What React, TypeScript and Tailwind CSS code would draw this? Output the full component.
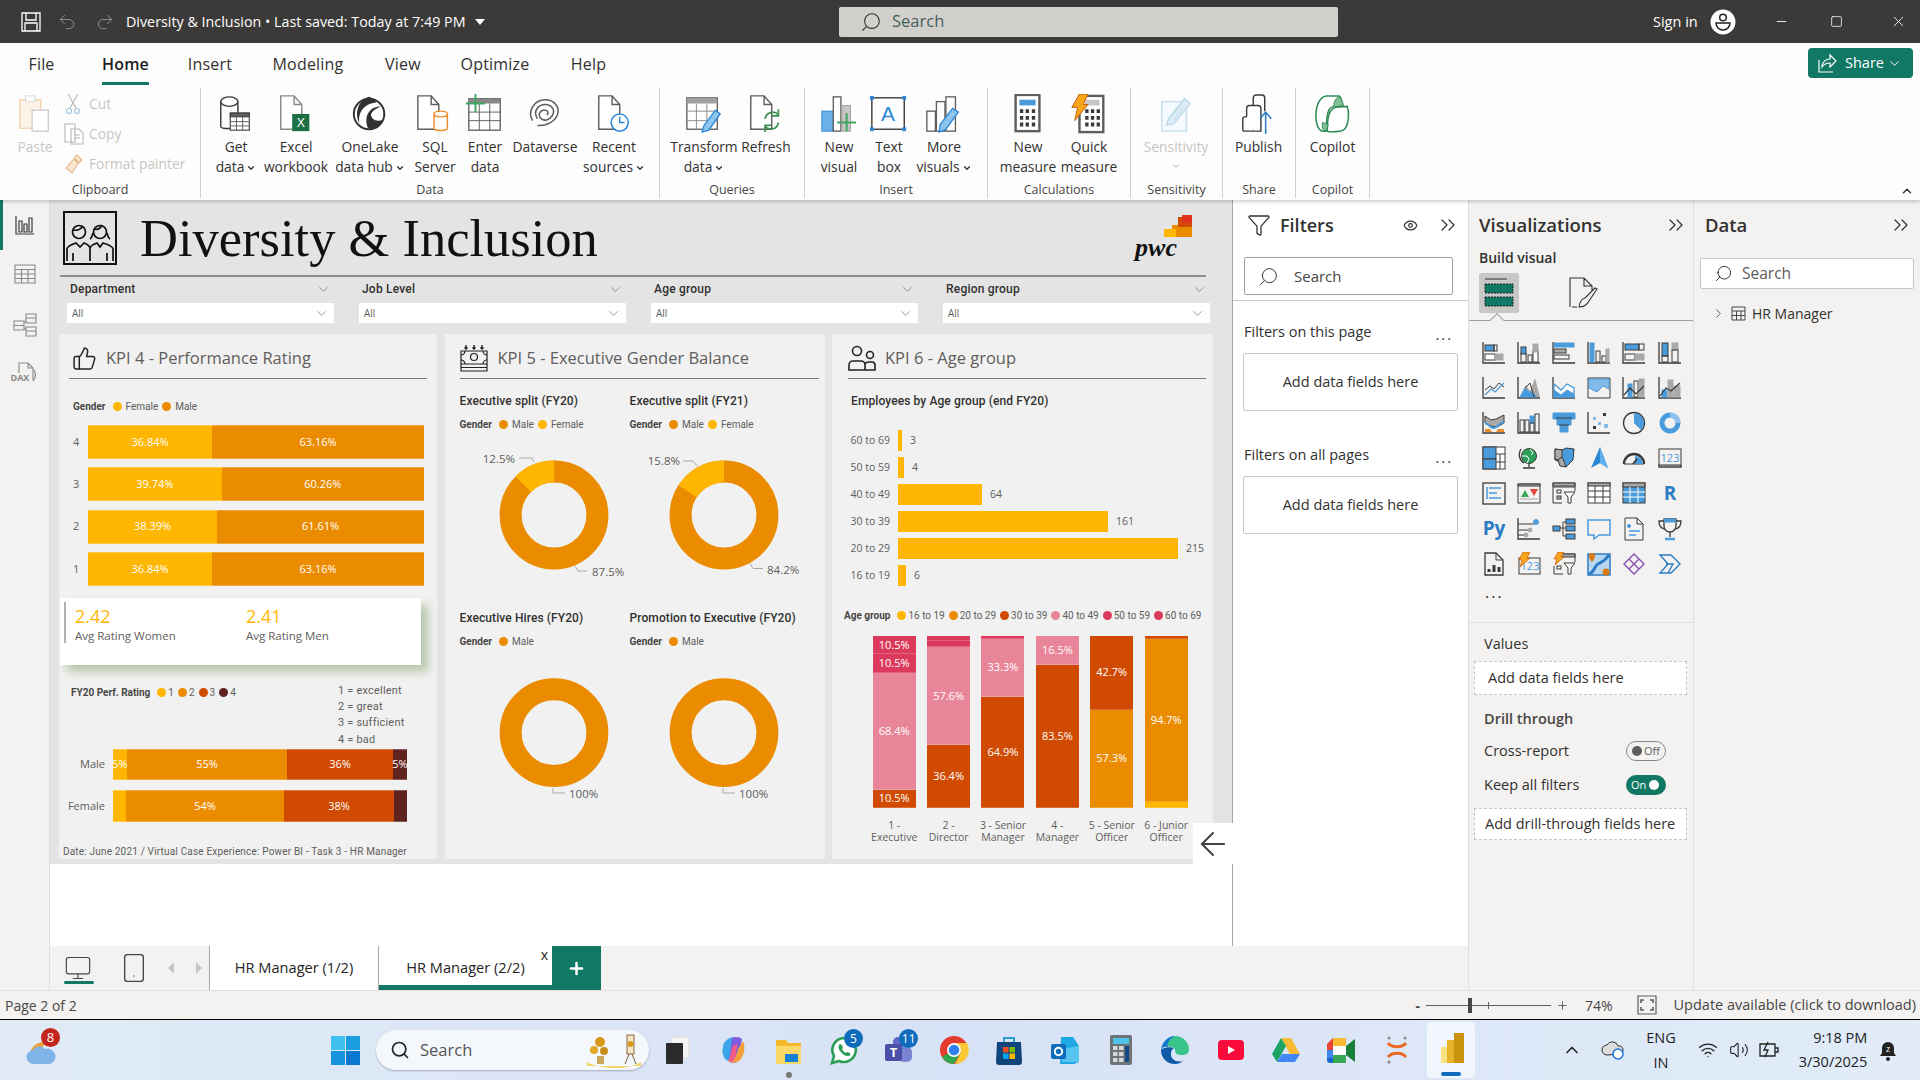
import { ReactNode } from 'react';
import {
  ArrowLeft, ChevronDown, ChevronRight, ChevronsRight, ChevronUp, Eye, Funnel, Minus, Monitor, Plus,
  Redo2, Search, Smartphone, Square, ThumbsUp, Undo2, Volume2, Wifi, X,
} from 'lucide-react';

const K = '#3b3a39';
const B = '#4a9bdc';
const G = '#a9a9a9';

const Svg = ({ children, s = 24, box = 24, cls = '' }: { children: ReactNode; s?: number; box?: number; cls?: string }) => (
  <svg width={s} height={s} viewBox={`0 0 ${box} ${box}`} fill="none" stroke={K} strokeWidth="1" className={cls}>
    {children}
  </svg>
);

const Axis = () => <path d="M1 1v21h22" stroke={K} strokeWidth="1.3" />;

// ---------- ribbon icons ----------
const doc = 'M5 2h14l8 9v26H5z M19 2v9h8';
const ribbonIcons: Record<string, ReactNode> = {
  paste: (
    <>
      <rect x="5" y="6" width="22" height="30" fill="#fdf3e6" stroke="#f0d5b0" strokeWidth="1.5" />
      <rect x="11" y="2" width="10" height="6" fill="#fff" stroke="#d8d8d8" />
      <rect x="18" y="17" width="17" height="22" fill="#fff" stroke="#cfcfcf" strokeWidth="1.5" />
    </>
  ),
  get: (
    <>
      <path d="M5 8v26c0 3 18 3 18 0V8" strokeWidth="1.5" />
      <ellipse cx="14" cy="8" rx="9" ry="5" fill="#fff" strokeWidth="1.5" />
      <rect x="15" y="20" width="20" height="18" fill="#fff" stroke="#605e5c" strokeWidth="1.4" />
      <rect x="15" y="20" width="20" height="4" fill="#605e5c" />
      <path d="M15 29h20M15 33.5h20M21.5 24v14M28 24v14" stroke="#605e5c" />
    </>
  ),
  excel: (
    <>
      <path d={doc} fill="#fff" stroke="#8a8886" strokeWidth="1.5" />
      <rect x="17" y="21" width="18" height="18" fill="#1d7044" stroke="none" />
      <text x="26" y="35" fontSize="13" textAnchor="middle" fill="#fff" stroke="none" fontFamily="Liberation Sans">X</text>
    </>
  ),
  lake: (
    <>
      <circle cx="20" cy="21" r="16" fill="#fff" stroke="#323130" strokeWidth="2" />
      <path d="M20 3C9 6 4 20 10 31c-2-12 5-21 18-22-2-3-5-5-8-6zM32 13C20 13 14 24 19 36c6 1 14-2 16-9-8 3-13-1-13-6 2-4 6-6 10-8z" fill="#323130" stroke="none" />
    </>
  ),
  sql: (
    <>
      <path d={doc} fill="#fff" stroke="#605e5c" strokeWidth="1.5" transform="translate(-2 0)" />
      <path d="M20 21v15c0 3 14 3 14 0V21" fill="#fff" stroke="#ea8c2b" strokeWidth="1.5" />
      <ellipse cx="27" cy="21" rx="7" ry="3" fill="#fff" stroke="#ea8c2b" strokeWidth="1.5" />
    </>
  ),
  enter: (
    <>
      <rect x="4" y="5" width="33" height="33" fill="#fff" stroke="#605e5c" strokeWidth="1.4" />
      <rect x="4" y="5" width="33" height="5" fill="#8a8886" stroke="none" />
      <path d="M4 19h33M4 28h33M15 10v28M26 10v28" stroke="#605e5c" />
      <path d="M11 0v19M1 10h20" stroke="#3ba55d" strokeWidth="2" />
    </>
  ),
  verse: (
    <>
      <path d="M8 28C2 18 10 6 21 6c10 0 16 8 13 16-3 7-12 12-21 11" stroke="#605e5c" strokeWidth="1.6" />
      <path d="M13 26C8 18 14 11 21 11c7 0 11 6 8 11-3 6-10 7-13 3-3-5 2-9 5-8 3 0 4 3 2 5" stroke="#605e5c" strokeWidth="1.6" />
    </>
  ),
  recent: (
    <>
      <path d={doc} fill="#fff" stroke="#605e5c" strokeWidth="1.5" />
      <circle cx="27" cy="30" r="9" fill="#fff" stroke="#2b88d8" strokeWidth="1.6" />
      <path d="M27 24v6h5" stroke="#2b88d8" strokeWidth="1.5" />
    </>
  ),
  transform: (
    <>
      <rect x="3" y="4" width="32" height="33" fill="#fff" stroke="#605e5c" strokeWidth="1.4" />
      <rect x="3" y="4" width="32" height="6" fill="#a0a0a0" stroke="none" />
      <path d="M3 18h32M3 28h32M13 10v27M24 10v27" stroke="#8a8886" />
      <path d="M33 17l5 4-12 17-7 2 2-7z" fill="#8ec5ee" stroke="#2b88d8" strokeWidth="1.4" />
    </>
  ),
  refresh: (
    <>
      <path d={doc} fill="#fff" stroke="#605e5c" strokeWidth="1.5" />
      <path d="M20 26a8 8 0 0 1 14-4M34 30a8 8 0 0 1-14 4" stroke="#3b8e4d" strokeWidth="1.8" />
      <path d="M34 16v7h-7M20 40v-7h7" stroke="#3b8e4d" strokeWidth="1.8" />
    </>
  ),
  newvis: (
    <>
      <rect x="3" y="18" width="12" height="21" fill="#6cb0ea" stroke="#2b88d8" />
      <rect x="15" y="3" width="8" height="36" fill="#fff" stroke="#605e5c" strokeWidth="1.4" />
      <rect x="24" y="12" width="9" height="27" fill="#c8c6c4" stroke="#a19f9d" />
      <path d="M29 20v19M19 30h20" stroke="#3ba55d" strokeWidth="2" />
    </>
  ),
  textbox: (
    <>
      <rect x="3" y="4" width="34" height="33" fill="#fff" stroke="#323130" strokeWidth="1.4" />
      <rect x="1" y="2" width="4" height="4" fill="#2b88d8" stroke="none" />
      <rect x="35" y="2" width="4" height="4" fill="#2b88d8" stroke="none" />
      <rect x="1" y="35" width="4" height="4" fill="#2b88d8" stroke="none" />
      <rect x="35" y="35" width="4" height="4" fill="#2b88d8" stroke="none" />
      <text x="20" y="28" fontSize="22" textAnchor="middle" fill="#2b88d8" stroke="none" fontFamily="Liberation Sans">A</text>
    </>
  ),
  more: (
    <>
      <rect x="3" y="18" width="9" height="21" fill="#fff" stroke="#605e5c" strokeWidth="1.4" />
      <rect x="13" y="8" width="9" height="31" fill="#fff" stroke="#605e5c" strokeWidth="1.4" />
      <rect x="23" y="3" width="10" height="36" fill="#fff" stroke="#605e5c" strokeWidth="1.4" />
      <path d="M30 15l6 4-13 18-7 3 1-8z" fill="#8ec5ee" stroke="#2b88d8" strokeWidth="1.4" />
    </>
  ),
  measure: (
    <>
      <rect x="8" y="1" width="25" height="38" fill="#fff" stroke="#605e5c" strokeWidth="2.5" />
      <rect x="12" y="6" width="17" height="6" fill="#4a9bdc" stroke="none" />
      <path d="M12.5 18h3.5M18.5 18h3.5M25 18h3.5M12.5 25h3.5M18.5 25h3.5M25 25h3.5M12.5 32h3.5M18.5 32h3.5M25 32h3.5" stroke="#3b3a39" strokeWidth="4" />
    </>
  ),
  quick: (
    <>
      <rect x="11" y="2" width="25" height="38" fill="#fff" stroke="#605e5c" strokeWidth="2.5" />
      <rect x="17" y="6" width="15" height="6" fill="#c8c6c4" stroke="none" />
      <path d="M17 18h3.5M23 18h3.5M29 18h3.5M17 25h3.5M23 25h3.5M29 25h3.5M17 32h3.5M23 32h3.5M29 32h3.5" stroke="#3b3a39" strokeWidth="4" />
      <path d="M11 0h9l-5 11h5L6 28l3-14H3z" fill="#f8a51b" stroke="#c45a09" />
    </>
  ),
  sens: (
    <>
      <rect x="6" y="8" width="26" height="31" fill="#f4fafd" stroke="#c7e0ef" strokeWidth="1.5" />
      <path d="M13 26L30 5l6 5-17 21-8 2z" fill="#dcecf6" stroke="#bcd9ea" strokeWidth="1.4" />
      <path d="M16 24l8-10M19 27l8-10" stroke="#bcd9ea" />
    </>
  ),
  publish: (
    <>
      <rect x="4" y="24" width="12" height="15" rx="2" fill="#fff" stroke="#3b3a39" strokeWidth="1.5" />
      <path d="M8 24V15a3 3 0 0 1 3-3h9a3 3 0 0 1 3 3v24H16" fill="#fff" stroke="#3b3a39" strokeWidth="1.5" />
      <path d="M15 12V4a3 3 0 0 1 3-3h6a3 3 0 0 1 3 3v14" stroke="#3b3a39" strokeWidth="1.5" />
      <path d="M28 42V20M22 26l6-7 6 7" stroke="#2b7cc4" strokeWidth="1.6" />
    </>
  ),
  copilot: (
    <>
      <path d="M14 2h13c2 0 3 3 4 9l-9 2c-5 1-6 4-7 10l-2 16h-2C6 39 3 32 3 24 3 12 7 3 14 2z" fill="#fff" stroke="#2f8a55" strokeWidth="1.6" />
      <path d="M27 3c2 0 4 5 5 9l-10 2c-1-4 2-10 5-11z" fill="#7fbf95" stroke="#2f8a55" />
      <path d="M24 14l12-1c2 6 2 19-3 24-3 3-14 3-18 2 0-8 0-23 9-25z" fill="#fff" stroke="#2f8a55" strokeWidth="1.6" />
      <path d="M10 30l6 2-2 7c-4 0-5-5-4-9z" fill="#7fbf95" stroke="#2f8a55" />
    </>
  ),
};

const RibbonIcon = ({ name }: { name: string }) => (
  <svg width="40" height="40" viewBox="0 0 42 42" fill="none" stroke={K} strokeWidth="1" className="shrink-0">
    {ribbonIcons[name]}
  </svg>
);

const Chev = () => <ChevronDown size={10} strokeWidth={3} className="inline ml-[2px]" />;

const RibbonBtn = ({ icon, lines, w, chev, dim }: { icon: string; lines: string[]; w: string; chev?: boolean; dim?: boolean }) => (
  <div className={`flex flex-col items-center shrink-0 ${w}`}>
    <div className="h-[40px] flex items-center justify-center">
      <RibbonIcon name={icon} />
    </div>
    <div className={`mt-[3px] text-[13.8px] leading-[20px] text-center whitespace-nowrap ${dim ? 'text-[#c8c6c4]' : 'text-[#323130]'}`}>
      <div>{lines[0]}</div>
      {lines[1] && (
        <div>
          {lines[1]}
          {chev && <Chev />}
        </div>
      )}
    </div>
  </div>
);

const Group = ({ label, w, pl, children }: { label: string; w: string; pl: string; children: ReactNode }) => (
  <div className={`flex flex-col shrink-0 border-r border-[#d2d0ce] h-[110px] ${w}`}>
    <div className={`flex h-[94px] pt-[6px] ${pl}`}>{children}</div>
    <div className="text-[12.5px] leading-[16px] text-center text-[#484644]">{label}</div>
  </div>
);

const TitleBar = () => (
  <div className="h-[43px] bg-[#3b3a38] flex items-center text-white shrink-0">
    <div className="w-[839px] flex items-center">
      <svg width="20" height="20" viewBox="0 0 20 20" fill="none" stroke="#fff" strokeWidth="1.3" className="ml-[21px]">
        <path d="M1 1h18v18H1zM5 1v7h10V1M4 19v-8h12v8" />
      </svg>
      <Undo2 size={20} strokeWidth={1} color="#a19f9d" className="ml-[16px]" />
      <Redo2 size={20} strokeWidth={1} color="#a19f9d" className="ml-[18px]" />
      <span className="ml-[11px] text-[14.3px] whitespace-nowrap">Diversity &amp; Inclusion • Last saved: Today at 7:49 PM</span>
      <span className="ml-[9px] w-0 h-0 border-x-[5px] border-x-transparent border-t-[6px] border-t-white" />
    </div>
    <div className="w-[499px] h-[30px] bg-[#d2d0cc] rounded-[2px] flex items-center text-[#44605a]">
      <Search size={22} strokeWidth={1.2} color="#323130" className="ml-[21px] -scale-x-100" />
      <span className="ml-[10px] text-[16.5px]">Search</span>
    </div>
    <span className="ml-[315px] text-[14.5px] whitespace-nowrap">Sign in</span>
    <svg width="26" height="26" viewBox="0 0 26 26" className="ml-[12px]">
      <circle cx="13" cy="13" r="12.5" fill="#fff" />
      <circle cx="13" cy="8.5" r="3.3" fill="none" stroke="#222" strokeWidth="1.5" />
      <path d="M6 14h14c0 4-3 7-7 7s-7-3-7-7z" fill="none" stroke="#222" strokeWidth="1.5" />
    </svg>
    <Minus size={15} strokeWidth={1.4} className="ml-[38px]" />
    <Square size={13} strokeWidth={1.4} className="ml-[41px]" />
    <X size={17} strokeWidth={1.2} className="ml-[47px]" />
  </div>
);

const MenuTab = ({ t, cls, on }: { t: string; cls: string; on?: boolean }) => (
  <div className={`${cls} flex justify-center pt-[4px] h-[37px] text-[16px] tracking-[0.2px] leading-[25px] border-b-[3px] whitespace-nowrap ${on ? 'border-[#117865] text-[#201f1e] font-semibold' : 'border-transparent text-[#323130]'}`}>
    {t}
  </div>
);

const MenuRow = () => (
  <div className="h-[45px] bg-[#fdfdfd] flex items-start pt-[5px] shrink-0">
    <MenuTab t="File" cls="ml-[29px] w-[25px]" />
    <MenuTab t="Home" cls="ml-[48px] w-[47px]" on />
    <MenuTab t="Insert" cls="ml-[40px] w-[42px]" />
    <MenuTab t="Modeling" cls="ml-[40px] w-[74px]" />
    <MenuTab t="View" cls="ml-[40px] w-[36px]" />
    <MenuTab t="Optimize" cls="ml-[39px] w-[70px]" />
    <MenuTab t="Help" cls="ml-[41px] w-[35px]" />
    <div className="ml-auto mr-[7px] w-[105px] h-[30px] bg-[#117865] rounded-[4px] flex items-center text-white text-[14.5px]">
      <svg width="22" height="22" viewBox="0 0 22 22" fill="none" stroke="#fff" strokeWidth="1.2" className="ml-[8px]">
        <path d="M3 8v12h14M6 15c0-5 4-8 8-8V3l6 6-6 6v-4c-3 0-6 1-8 4z" />
      </svg>
      <span className="ml-[7px]">Share</span>
      <ChevronDown size={15} strokeWidth={1.6} className="ml-[3px]" />
    </div>
  </div>
);

const Ribbon = () => (
  <div className="relative z-10 h-[112px] bg-[#fdfdfd] flex shrink-0 shadow-[0_2px_3px_rgba(0,0,0,0.18)]">
    <Group label="Clipboard" w="w-[201px]" pl="pl-[12px]">
      <div className="w-[46px] flex flex-col items-center text-[#c8c6c4]">
        <RibbonIcon name="paste" />
        <div className="mt-[3px] text-[13.8px] leading-[20px]">Paste</div>
      </div>
      <div className="ml-[6px] -mt-[5px] flex flex-col text-[13.8px] text-[#c8c6c4]">
        <div className="h-[30px] flex items-center">
          <svg width="18" height="22" viewBox="0 0 18 22" fill="none" stroke="#b9b7b5" strokeWidth="1.1">
            <path d="M4 1l8 14M14 1L6 15" />
            <circle cx="5" cy="18" r="2.5" stroke="#9cc4e4" />
            <circle cx="13" cy="18" r="2.5" stroke="#9cc4e4" />
          </svg>
          <span className="ml-[7px]">Cut</span>
        </div>
        <div className="h-[30px] flex items-center">
          <svg width="20" height="22" viewBox="0 0 20 22" fill="none" stroke="#b9b7b5" strokeWidth="1.1">
            <path d="M1 1h10v18H1zM7 6h8l4 4v11H7zM10 12h6M10 15h6" fill="#fff" />
          </svg>
          <span className="ml-[5px]">Copy</span>
        </div>
        <div className="h-[30px] flex items-center whitespace-nowrap">
          <svg width="20" height="22" viewBox="0 0 20 22" fill="none" stroke="#b9b7b5" strokeWidth="1.1">
            <path d="M13 2l5 5-3 3-5-5zM10 6l4 4-6 10-6-5z" fill="#fbe6d0" stroke="#e5b68d" />
          </svg>
          <span className="ml-[5px]">Format painter</span>
        </div>
      </div>
    </Group>
    <Group label="Data" w="w-[459px]" pl="pl-[6px]">
      <RibbonBtn icon="get" lines={['Get', 'data']} chev w="w-[58px]" />
      <RibbonBtn icon="excel" lines={['Excel', 'workbook']} w="w-[62px]" />
      <RibbonBtn icon="lake" lines={['OneLake', 'data hub']} chev w="w-[86px]" />
      <RibbonBtn icon="sql" lines={['SQL', 'Server']} w="w-[44px]" />
      <RibbonBtn icon="enter" lines={['Enter', 'data']} w="w-[56px]" />
      <RibbonBtn icon="verse" lines={['Dataverse']} w="w-[64px]" />
      <RibbonBtn icon="recent" lines={['Recent', 'sources']} chev w="w-[74px]" />
    </Group>
    <Group label="Queries" w="w-[145px]" pl="pl-[8px]">
      <RibbonBtn icon="transform" lines={['Transform', 'data']} chev w="w-[72px]" />
      <RibbonBtn icon="refresh" lines={['Refresh']} w="w-[52px]" />
    </Group>
    <Group label="Insert" w="w-[183px]" pl="pl-[9px]">
      <RibbonBtn icon="newvis" lines={['New', 'visual']} w="w-[50px]" />
      <RibbonBtn icon="textbox" lines={['Text', 'box']} w="w-[50px]" />
      <RibbonBtn icon="more" lines={['More', 'visuals']} chev w="w-[60px]" />
    </Group>
    <Group label="Calculations" w="w-[143px]" pl="pl-[8px]">
      <RibbonBtn icon="measure" lines={['New', 'measure']} w="w-[64px]" />
      <RibbonBtn icon="quick" lines={['Quick', 'measure']} w="w-[58px]" />
    </Group>
    <Group label="Sensitivity" w="w-[92px]" pl="pl-[8px]">
      <div className="w-[74px] flex flex-col items-center">
        <RibbonIcon name="sens" />
        <div className="mt-[3px] text-[13.8px] leading-[20px] text-[#c8c6c4]">Sensitivity</div>
        <ChevronDown size={10} strokeWidth={2} color="#a19f9d" className="mt-[4px]" />
      </div>
    </Group>
    <Group label="Share" w="w-[73px]" pl="pl-0">
      <RibbonBtn icon="publish" lines={['Publish']} w="w-[71px]" />
    </Group>
    <Group label="Copilot" w="w-[74px]" pl="pl-0">
      <RibbonBtn icon="copilot" lines={['Copilot']} w="w-[73px]" />
    </Group>
    <ChevronUp size={14} strokeWidth={2.4} className="ml-auto mr-[6px] self-end mb-[2px]" color="#323130" />
  </div>
);

// ---------- report ----------
const dot = (c: string) => <span className={`inline-block w-[9px] h-[9px] rounded-full shrink-0 ${c}`} />;
const Y = 'bg-[#ffb600]';
const O = 'bg-[#eb8c00]';
const R = 'bg-[#d04a02]';
const Br = 'bg-[#602320]';
const Pk = 'bg-[#e88599]';
const Cr = 'bg-[#dc3a5c]';

const Legend = ({ title, items, gap = 'gap-[4px]' }: { title: string; items: [string, string][]; gap?: string }) => (
  <div className="flex items-center h-[12px] text-[10px] text-[#605e5c] font-['Roboto',sans-serif] whitespace-nowrap">
    <b className="font-bold mr-[7px] text-[#484644]">{title}</b>
    {items.map(([c, t]) => (
      <span key={t} className={`flex items-center mr-[4px] ${gap}`}>
        {dot(c)}
        {t}
      </span>
    ))}
  </div>
);

const KpiHead = ({ icon, title, cls, gap }: { icon: ReactNode; title: string; cls: string; gap: string }) => (
  <div className={`flex items-center h-[45px] pt-[4px] border-b border-[#7c7c7c] ${cls}`}>
    {icon}
    <span className={`${gap} text-[16.5px] text-[#605e5c] whitespace-nowrap`}>{title}</span>
  </div>
);

const Seg = ({ w, c, t }: { w: number; c: string; t?: string }) => (
  <div style={{ width: w }} className={`h-full flex items-center justify-center text-white text-[11px] border-y border-white/25 ${c}`}>
    {t}
  </div>
);

const ratingRows: [string, number, string, string][] = [
  ['4', 124, '36.84%', '63.16%'],
  ['3', 133.5, '39.74%', '60.26%'],
  ['2', 129, '38.39%', '61.61%'],
  ['1', 124, '36.84%', '63.16%'],
];

const Kpi4 = () => (
  <div className="w-[378px] h-[525px] bg-[#f1f1f1] shrink-0">
    <KpiHead
      cls="mx-[10px] pl-[3px]"
      gap="ml-[9px]"
      title="KPI 4 - Performance Rating"
      icon={<ThumbsUp size={25} strokeWidth={1.4} color="#222" />}
    />
    <div className="mt-[21px] ml-[14px]">
      <Legend title="Gender" items={[[Y, 'Female'], [O, 'Male']]} />
    </div>
    <div className="mt-[13px] flex flex-col gap-[8.3px]">
      {ratingRows.map(([n, f, a, b]) => (
        <div key={a + n} className="flex items-center h-[34px]">
          <span className="w-[29px] pl-[14px] text-[11px] text-[#605e5c]">{n}</span>
          <Seg w={f} c={Y} t={a} />
          <Seg w={336 - f} c={O} t={b} />
        </div>
      ))}
    </div>
    <div className="mt-[12px] ml-[1px] w-[361px] h-[67px] bg-white shadow-[7px_7px_9px_#b9c7ac] flex pt-[4px] pl-[4px]">
      <div className="w-[2px] h-[41px] bg-[#b0b0b0]" />
      <div className="ml-[9px] w-[171px] pt-[2px]">
        <div className="text-[18px] leading-[24px] text-[#ffb600]">2.42</div>
        <div className="text-[11.5px] leading-[16px] text-[#605e5c]">Avg Rating Women</div>
      </div>
      <div className="pt-[2px]">
        <div className="text-[18px] leading-[24px] text-[#ffb600]">2.41</div>
        <div className="text-[11.5px] leading-[16px] text-[#605e5c]">Avg Rating Men</div>
      </div>
    </div>
    <div className="mt-[18px] h-[65px] flex">
      <div className="w-[279px] pl-[12px] pt-[4px]">
        <Legend title="FY20 Perf. Rating" gap="gap-[2px]" items={[[Y, '1'], [O, '2'], [R, '3'], [Br, '4']]} />
      </div>
      <div className="text-[11px] leading-[16.3px] text-[#605e5c] font-['Roboto',sans-serif] tracking-[0.2px]">
        <div>1 = excellent</div>
        <div>2 = great</div>
        <div>3 = sufficient</div>
        <div>4 = bad</div>
      </div>
    </div>
    <div className="flex flex-col gap-[10px] mt-[1px]">
      <div className="flex items-center h-[31px]">
        <span className="w-[46px] text-right text-[11px] text-[#605e5c] mr-[8px]">Male</span>
        <Seg w={14} c={Y} t="5%" />
        <Seg w={160} c={O} t="55%" />
        <Seg w={106} c={R} t="36%" />
        <Seg w={14} c={Br} t="5%" />
      </div>
      <div className="flex items-center h-[32px]">
        <span className="w-[46px] text-right text-[11px] text-[#605e5c] mr-[8px]">Female</span>
        <Seg w={13} c={Y} />
        <Seg w={158} c={O} t="54%" />
        <Seg w={110} c={R} t="38%" />
        <Seg w={13} c={Br} />
      </div>
    </div>
    <div className="mt-[24px] ml-[4px] text-[10px] leading-[12px] text-[#605e5c] font-['Roboto',sans-serif] tracking-[0.18px] whitespace-nowrap">
      Date: June 2021 / Virtual Case Experience: Power BI - Task 3 - HR Manager
    </div>
  </div>
);

const wedge = (cx: number, cy: number, R0: number, r: number, frac: number) => {
  const a = frac * 2 * Math.PI;
  const x1 = cx - R0 * Math.sin(a);
  const y1 = cy - R0 * Math.cos(a);
  const x2 = cx - r * Math.sin(a);
  const y2 = cy - r * Math.cos(a);
  return `M${cx} ${cy - R0}A${R0} ${R0} 0 0 0 ${x1} ${y1}L${x2} ${y2}A${r} ${r} 0 0 1 ${cx} ${cy - r}Z`;
};

type Lbl = { t: string; x: number; y: number; end?: boolean; d: string };

const Donut = ({ cy, frac, labels }: { cy: number; frac?: number; labels: Lbl[] }) => (
  <svg width="170" height="170" viewBox="0 0 170 170" className="block">
    <circle cx="94" cy={cy} r="43.4" fill="none" stroke="#eb8c00" strokeWidth="22" />
    {frac && <path d={wedge(94, cy, 54.4, 32.4, frac)} fill="#ffb600" />}
    {labels.map((l) => (
      <g key={l.t}>
        <path d={l.d} fill="none" stroke="#a8a8a8" strokeWidth="1" />
        <text x={l.x} y={l.y} textAnchor={l.end ? 'end' : 'start'} fontSize="11.5" fill="#605e5c" fontFamily="Open Sans">
          {l.t}
        </text>
      </g>
    ))}
  </svg>
);

const chartTitle = "h-[16px] text-[12px] leading-[16px] text-[#323130] font-['Roboto',sans-serif] font-medium tracking-[0.1px] whitespace-nowrap";

const DonutCell = ({ title, items, cy, frac, labels }: { title: string; items: [string, string][]; cy: number; frac?: number; labels: Lbl[] }) => (
  <div className="h-[217px]">
    <div className={chartTitle}>{title}</div>
    <div className="mt-[10px]">
      <Legend title="Gender" items={items} />
    </div>
    <Donut cy={cy} frac={frac} labels={labels} />
  </div>
);

const Kpi5 = () => (
  <div className="w-[380px] h-[525px] bg-[#f1f1f1] shrink-0">
    <KpiHead
      cls="ml-[15px] mr-[6px]"
      gap="ml-[10px]"
      title="KPI 5 - Executive Gender Balance"
      icon={
        <svg width="28" height="28" viewBox="0 0 28 28" fill="none" stroke="#222" strokeWidth="1.2">
          <path d="M1 7h26v13H1zM1 20v7h26v-7M1 23.5h26" />
          <circle cx="14" cy="13" r="3.5" />
          <path d="M1 11a4 4 0 0 0 4-4M27 11a4 4 0 0 1-4-4M1 16a4 4 0 0 1 4 4M27 16a4 4 0 0 0-4 4" />
          <path d="M6 1v4M4.500 3.500L6 5l1.500-1.500M14 1v4M12.500 3.500L14 5l1.500-1.500M22 1v4M20.500 3.500L22 5l1.500-1.500" strokeWidth="1.4" />
        </svg>
      }
    />
    <div className="ml-[15px] mt-[13.7px] grid grid-cols-[170px_170px]">
      <DonutCell
        title="Executive split (FY20)"
        items={[[O, 'Male'], [Y, 'Female']]}
        cy={84}
        frac={0.125}
        labels={[
          { t: '12.5%', x: 55, y: 32, end: true, d: 'M59 27h13l2 4' },
          { t: '87.5%', x: 132, y: 145, d: 'M115 135l3 5h9' },
        ]}
      />
      <DonutCell
        title="Executive split (FY21)"
        items={[[O, 'Male'], [Y, 'Female']]}
        cy={84}
        frac={0.158}
        labels={[
          { t: '15.8%', x: 50, y: 34, end: true, d: 'M53 30h10l4 5' },
          { t: '84.2%', x: 137, y: 142.5, d: 'M120 132.5l3 5h10' },
        ]}
      />
      <DonutCell
        title="Executive Hires (FY20)"
        items={[[O, 'Male']]}
        cy={84.6}
        labels={[{ t: '100%', x: 109, y: 150, d: 'M93 140v5h12' }]}
      />
      <DonutCell
        title="Promotion to Executive (FY20)"
        items={[[O, 'Male']]}
        cy={84.6}
        labels={[{ t: '100%', x: 109, y: 150, d: 'M93 140v5h12' }]}
      />
    </div>
  </div>
);

const ageRows: [string, number, string][] = [
  ['60 to 69', 4, '3'],
  ['50 to 59', 6, '4'],
  ['40 to 49', 84, '64'],
  ['30 to 39', 210, '161'],
  ['20 to 29', 280, '215'],
  ['16 to 19', 8, '6'],
];

const stacks: { name: string[]; segs: [number, string, string?][] }[] = [
  { name: ['1 -', 'Executive'], segs: [[18, Cr, '10.5%'], [18, Cr, '10.5%'], [116, Pk, '68.4%'], [18, R, '10.5%']] },
  { name: ['2 -', 'Director'], segs: [[5, Cr], [6, Cr], [97, Pk, '57.6%'], [62, R, '36.4%']] },
  { name: ['3 - Senior', 'Manager'], segs: [[3, Cr], [57, Pk, '33.3%'], [110, R, '64.9%']] },
  { name: ['4 -', 'Manager'], segs: [[28, Pk, '16.5%'], [142, R, '83.5%']] },
  { name: ['5 - Senior', 'Officer'], segs: [[73, R, '42.7%'], [97, O, '57.3%']] },
  { name: ['6 - Junior', 'Officer'], segs: [[3, R], [161, O, '94.7%'], [6, Y]] },
];

const Kpi6 = () => (
  <div className="w-[381px] h-[525px] bg-[#f1f1f1] shrink-0">
    <KpiHead
      cls="ml-[16px] mr-[7px]"
      gap="ml-[9px]"
      title="KPI 6 - Age group"
      icon={
        <svg width="28" height="26" viewBox="0 0 28 26" fill="none" stroke="#222" strokeWidth="1.6">
          <circle cx="9" cy="6" r="4.5" />
          <circle cx="22" cy="10" r="3.5" />
          <path d="M1 25v-5a4 4 0 0 1 4-4h8a4 4 0 0 1 4 4v5zM17 19a4 4 0 0 1 3-2h4a3 3 0 0 1 3 3v5H17" />
        </svg>
      }
    />
    <div className={`ml-[19px] mt-[13.7px] ${chartTitle}`}>Employees by Age group (end FY20)</div>
    <div className="mt-[21.3px] flex flex-col gap-[6.05px]">
      {ageRows.map(([l, w, v]) => (
        <div key={l} className="flex items-center h-[21px] text-[10.5px] text-[#605e5c]">
          <span className="w-[58px] text-right mr-[8px] whitespace-nowrap">{l}</span>
          <div style={{ width: w }} className={`h-full ${Y}`} />
          <span className="ml-[8px]">{v}</span>
        </div>
      ))}
    </div>
    <div className="ml-[12px] mt-[23.4px]">
      <Legend
        title="Age group"
        gap="gap-[2px]"
        items={[[Y, '16 to 19'], [O, '20 to 29'], [R, '30 to 39'], [Pk, '40 to 49'], [Cr, '50 to 59'], ['bg-[#dc3a5d]', '60 to 69']]}
      />
    </div>
    <div className="ml-[35px] mt-[14.6px] flex">
      {stacks.map((s) => (
        <div key={s.name.join()} className="w-[54.4px] flex flex-col items-center shrink-0">
          <div className="w-[43px] h-[172px] flex flex-col">
            {s.segs.map(([h, c, t], i) => (
              <div key={i} style={{ height: (h * 172) / 170 }} className={`flex items-center justify-center text-white text-[11px] border-b border-white/20 ${c}`}>
                {t}
              </div>
            ))}
          </div>
          <div className="mt-[11px] text-[10.5px] leading-[12px] text-center text-[#605e5c] whitespace-nowrap">
            <div>{s.name[0]}</div>
            <div>{s.name[1]}</div>
          </div>
        </div>
      ))}
    </div>
  </div>
);

const Slicer = ({ label }: { label: string }) => (
  <div className="w-[267px] shrink-0">
    <div className="h-[26px] pb-[2px] flex items-center justify-between pl-[3px] pr-[3px] text-[12px] text-[#323130] font-['Roboto',sans-serif] font-medium">
      <span className="tracking-[0.2px]">{label}</span>
      <ChevronDown size={15} strokeWidth={1} color="#605e5c" />
    </div>
    <div className="h-[20px] bg-white flex items-center justify-between px-[5px] text-[10px] text-[#605e5c]">
      <span>All</span>
      <ChevronDown size={15} strokeWidth={1} color="#605e5c" />
    </div>
  </div>
);

const Canvas = () => (
  <div className="relative w-[1183px] shrink-0 bg-white border-r border-[#a8a8a8]">
    <div className="h-[664px] bg-[#e4e4e4]">
      <div className="h-[75px] flex items-center pl-[13px]">
        <svg width="54" height="54" viewBox="0 0 54 54" fill="none" stroke="#111" strokeWidth="1.7">
          <rect x="1" y="1" width="52" height="52" strokeWidth="2" />
          <circle cx="16" cy="21" r="6.5" />
          <circle cx="37" cy="21" r="6.5" />
          <path d="M10 19c4 1 8-1 10-4M31 18c3 1 6 0 8-4M30 22c-1 3-1 5-3 6M44 22c1 3 1 5 3 6" />
          <path d="M4 50V38c0-3 6-5 9-6l4 4 4-4c3 1 6 3 6 6v12M27 50V38c0-3 4-5 7-6l3 4 3-4c3 1 10 3 10 6v12M27 36v14M10 42v8M44 42v8" />
        </svg>
        <span className="ml-[23px] font-['Liberation_Serif',serif] text-[52.5px] leading-[56px] text-[#111] whitespace-nowrap">Diversity &amp; Inclusion</span>
        <div className="ml-auto mr-[40px] flex flex-col items-end">
          <svg width="34" height="25" viewBox="0 0 34 25" className="-mb-[5px]">
            <rect x="14" y="10" width="20" height="12" fill="#eb8c00" />
            <rect x="20" y="2" width="14" height="10" fill="#d04a02" />
            <rect x="24" y="0" width="10" height="8" fill="#e0301e" />
            <rect x="6" y="14" width="12" height="8" fill="#ffb600" />
          </svg>
          <span className="font-['Liberation_Serif',serif] italic font-bold text-[26px] leading-[26px] text-[#111] pr-[15px]">pwc</span>
        </div>
      </div>
      <div className="h-[2px] bg-[#8e8e8e] ml-[10px] mr-[26px]" />
      <div className="flex gap-[25px] ml-[17px]">
        <Slicer label="Department" />
        <Slicer label="Job Level" />
        <Slicer label="Age group" />
        <Slicer label="Region group" />
      </div>
      <div className="mt-[11px] ml-[9px] flex gap-[7.5px]">
        <Kpi4 />
        <Kpi5 />
        <Kpi6 />
      </div>
    </div>
    <div className="absolute left-[1143px] top-[623px] w-[40px] h-[41px] bg-white flex items-center justify-center">
      <ArrowLeft size={38} strokeWidth={1.3} color="#444" />
    </div>
  </div>
);

// ---------- side panels ----------
const FilterWell = ({ title, cls }: { title: string; cls: string }) => (
  <div className={cls}>
    <div className="flex items-center justify-between pl-[11px] pr-[15px] h-[22px] text-[14.5px] text-[#323130]">
      <span>{title}</span>
      <span className="tracking-[2px] text-[#323130] leading-[10px] pt-[6px]">...</span>
    </div>
    <div className="mt-[10px] ml-[10px] w-[215px] h-[58px] bg-white border border-[#c8c6c4] rounded-[2px] flex items-center justify-center text-[14.5px] text-[#323130]">
      Add data fields here
    </div>
  </div>
);

const FiltersPanel = () => (
  <div className="w-[235px] shrink-0 bg-white">
    <div className="h-[50px] flex items-center">
      <Funnel size={24} strokeWidth={1.3} color="#323130" className="ml-[14px]" />
      <span className="ml-[9px] text-[18px] font-semibold text-[#323130]">Filters</span>
      <Eye size={15} strokeWidth={1.8} color="#323130" className="ml-[69px]" />
      <ChevronsRight size={24} strokeWidth={1.2} color="#323130" className="ml-[18px]" />
    </div>
    <div className="ml-[11px] mt-[7px] w-[209px] h-[38px] border border-[#a19f9d] rounded-[2px] flex items-center">
      <Search size={21} strokeWidth={1.1} color="#323130" className="ml-[13px] -scale-x-100" />
      <span className="ml-[15px] text-[15px] text-[#484644]">Search</span>
    </div>
    <div className="h-px bg-[#c8c6c4] mt-[5px]" />
    <FilterWell title="Filters on this page" cls="mt-[20px]" />
    <FilterWell title="Filters on all pages" cls="mt-[33px]" />
  </div>
);

const vizIcons: ReactNode[] = [
  <><Axis /><rect x="3" y="4" width="9" height="6" fill={B} stroke={K} /><rect x="12" y="4" width="3" height="6" stroke={K} /><rect x="3" y="13" width="10" height="6" fill="#fff" stroke={K} /><rect x="13" y="13" width="8" height="6" fill={G} stroke={G} /></>,
  <><Axis /><rect x="4" y="12" width="5" height="9" stroke={K} /><rect x="4" y="6" width="5" height="7" fill={B} stroke={K} /><rect x="11" y="14" width="4" height="7" stroke={K} /><rect x="16" y="10" width="5" height="11" fill="#fff" stroke={K} /><rect x="16" y="3" width="5" height="8" fill={G} stroke={G} /></>,
  <><Axis /><rect x="2" y="2" width="20" height="4" fill={B} stroke={B} /><rect x="2" y="8" width="12" height="4" stroke={K} fill={G} /><rect x="2" y="14" width="15" height="4" stroke={K} /></>,
  <><Axis /><rect x="3" y="2" width="4" height="19" fill={B} stroke={B} /><rect x="9" y="10" width="4" height="11" stroke={K} /><rect x="15" y="15" width="4" height="6" stroke={K} /><rect x="19" y="8" width="3" height="13" fill={G} stroke={G} /></>,
  <><Axis /><rect x="3" y="3" width="14" height="6" fill={B} stroke={K} /><rect x="17" y="3" width="5" height="6" stroke={K} /><rect x="3" y="13" width="10" height="6" stroke={K} /><rect x="13" y="13" width="9" height="6" fill={G} stroke={G} /></>,
  <><Axis /><rect x="4" y="2" width="6" height="13" fill={B} stroke={K} /><rect x="4" y="15" width="6" height="6" stroke={K} /><rect x="14" y="2" width="6" height="7" fill={G} stroke={G} /><rect x="14" y="9" width="6" height="12" stroke={K} /></>,
  <><Axis /><path d="M3 14l5-4 4 3 5-6 5 4" stroke={K} /><path d="M3 19l6-6 4 3 9-9" stroke={B} strokeWidth="1.3" /></>,
  <><Axis /><path d="M3 21l6-12 4 6 5-13 5 19z" fill={G} stroke="none" /><path d="M3 21l5-9 3 3 4 2 5 4z" fill={B} stroke={B} /><path d="M8 12l5-5 4 14" stroke={K} /></>,
  <><Axis /><path d="M2 8l7 6 6-6 7 4v9H2z" fill="#fff" stroke={B} strokeWidth="1.3" /><path d="M2 14l7 5 6-5 7 4v3H2z" fill={B} stroke={B} /></>,
  <><path d="M1 2h22v20H1z" stroke={K} /><path d="M2 3h20v10l-6-3-6 6-8-4z" fill="#82bbea" stroke={B} /></>,
  <><Axis /><rect x="6" y="8" width="4" height="13" fill={B} stroke={B} /><rect x="12" y="5" width="4" height="16" stroke={K} /><rect x="17" y="3" width="5" height="18" fill={G} stroke={G} /><path d="M2 19l6-7 6 6 8-8" stroke={K} strokeWidth="1.2" /></>,
  <><Axis /><rect x="4" y="14" width="5" height="7" fill={B} stroke={B} /><rect x="10" y="4" width="5" height="17" fill={G} stroke={G} /><rect x="16" y="10" width="6" height="11" fill={G} stroke={G} /><path d="M2 20l6-8 5 3 9-8" stroke={K} strokeWidth="1.2" /></>,
  <><Axis /><path d="M3 5l6 4 5-1 8-4v8l-7 4-6-1-6-3z" fill={G} stroke={K} /><path d="M3 12c5 1 5 6 9 5s6-6 10-6" stroke={B} strokeWidth="2" /><path d="M3 18h5l2 3H3zM16 18h6v3h-8z" fill="#ea8c2b" stroke="none" /></>,
  <><Axis /><rect x="3" y="9" width="4" height="12" stroke={K} /><rect x="8" y="9" width="4" height="12" stroke={K} /><rect x="13" y="5" width="4" height="7" fill={B} stroke={B} /><rect x="13" y="12" width="4" height="9" stroke={K} /><rect x="18" y="3" width="4" height="18" stroke={K} /></>,
  <><path d="M1 2h22v6h-4v6h-3v7H8v-7H5V8H1z" fill={B} stroke={B} /><path d="M4 7h16M7 14h10" stroke={K} /></>,
  <><Axis /><rect x="6" y="6" width="3" height="3" fill="#82bbea" stroke="none" /><rect x="11" y="11" width="3" height="3" fill="#82bbea" stroke="none" /><rect x="16" y="2" width="3" height="3" fill={K} stroke="none" /><rect x="6" y="15" width="3" height="3" fill={K} stroke="none" /><rect x="17" y="13" width="4" height="4" fill="#82bbea" stroke="none" /></>,
  <><circle cx="12" cy="12" r="10.5" stroke={K} strokeWidth="1.3" /><path d="M12 2a10 10 0 0 1 7 17l-7-7z" fill={B} stroke="none" /></>,
  <><circle cx="12" cy="12" r="8" stroke={B} strokeWidth="5" /><path d="M12 4a8 8 0 0 1 8 8" stroke="#8fc2ec" strokeWidth="5" /></>,
  <><rect x="1" y="1" width="22" height="22" fill="#fff" stroke={K} /><rect x="1" y="1" width="13" height="12" fill={B} stroke={K} /><rect x="1" y="13" width="13" height="10" fill={B} stroke={K} /><path d="M14 8h9M14 16h9M18 8v15" stroke={K} /></>,
  <><circle cx="12" cy="10" r="7.5" fill="#2e9e5b" stroke={K} /><path d="M5 10h5l2 3-2 4M13 3l3 4-2 2" stroke="#fff" /><path d="M12 18v3M6 22h12M4 3c-3 5-2 11 3 14" stroke={K} strokeWidth="1.3" /></>,
  <><path d="M3 3l7 1 4-2 8 1-1 11-7 7-6-5-5-2z" fill={B} stroke={K} /><path d="M3 3l7 1v7l-4 3-3-1z" fill={G} stroke={K} /><path d="M10 11l-4 3 2 6 6 1-2-6z" fill={G} stroke={K} /></>,
  <><path d="M13 1l8 21-8-5-9 5z" fill="#2b88d8" stroke="none" /><path d="M13 1v16l8 5z" fill="#5fb0ee" stroke="none" /></>,
  <><path d="M2 18a10 10 0 0 1 20 0" stroke={K} strokeWidth="2.4" /><path d="M2 18h20" stroke={K} /><path d="M13 10a8 8 0 0 1 8 8h-8z" fill={B} stroke="none" /><path d="M11 18l4-5" stroke={K} strokeWidth="2" /></>,
  <><rect x="1" y="3" width="22" height="18" stroke={K} /><rect x="1" y="19" width="22" height="2" fill={G} stroke={K} /><text x="12" y="16" fontSize="11" textAnchor="middle" fill={B} stroke="none" fontFamily="Open Sans">123</text></>,
  <><rect x="1" y="2" width="22" height="21" stroke={K} strokeWidth="1.3" /><path d="M5 6v12M7 7h12M7 12h8M7 17h12" stroke={B} strokeWidth="1.5" /></>,
  <><rect x="1" y="3" width="22" height="19" stroke={K} /><path d="M1 3h22v2H1z" fill={G} /><path d="M4 16l4-7 4 7z" fill="#3aa65a" stroke="none" /><path d="M13 8h8l-4 7z" fill="#e0453a" stroke="none" /><path d="M3 18h18" stroke={G} /></>,
  <><path d="M1 2h22v8M1 2v20h9" stroke={K} /><path d="M1 6h22" stroke={K} /><rect x="1" y="2" width="22" height="3" fill={G} stroke={K} /><rect x="5" y="9" width="4" height="3" stroke={K} /><rect x="5" y="15" width="4" height="3" fill={G} stroke={K} /><path d="M12 11h11l-4 5v6h-3v-6z" fill="#fff" stroke={K} /></>,
  <><rect x="1" y="2" width="22" height="20" fill="#fff" stroke={K} /><rect x="1" y="2" width="22" height="3" fill={G} stroke={K} /><path d="M1 10h22M1 16h22M8 5v17M16 5v17" stroke={K} /></>,
  <><rect x="1" y="2" width="22" height="20" fill={B} stroke={K} /><rect x="1" y="2" width="22" height="4" fill={G} stroke={K} /><path d="M1 11h22M1 16h22M8 6v16M16 6v16" stroke="#fff" /></>,
  <text x="12" y="19" fontSize="19" textAnchor="middle" fill="#2b7cc4" stroke="none" fontWeight="700" fontFamily="Open Sans">R</text>,
  <text x="12" y="18" fontSize="19" textAnchor="middle" fill="#2b7cc4" stroke="none" fontWeight="700" fontFamily="Open Sans">Py</text>,
  <><path d="M1 1v21h22" stroke={K} strokeWidth="1.3" /><path d="M1 7h16M1 13h11M1 18h7" stroke={K} /><circle cx="19" cy="5" r="2.5" fill={B} stroke={B} /><circle cx="13" cy="13" r="2" fill={G} stroke={G} /><circle cx="9" cy="18" r="2" fill={G} stroke={G} /></>,
  <><rect x="1" y="9" width="7" height="5" fill={B} stroke={K} /><rect x="14" y="2" width="9" height="5" fill={B} stroke={K} /><rect x="14" y="9" width="9" height="5" fill={B} stroke={K} /><rect x="14" y="17" width="9" height="5" fill={B} stroke={K} /><path d="M8 11h6M11 5h3M11 5v14h3" stroke={K} /></>,
  <path d="M1 3h22v15H12l-5 4v-4H1z" stroke={B} strokeWidth="1.5" />,
  <><path d="M3 1h12l6 6v16H3z" stroke={K} /><path d="M15 1v6h6" stroke={K} /><circle cx="7" cy="9" r="1.5" fill={B} stroke={B} /><path d="M7 14h11M7 18h7" stroke={B} strokeWidth="1.4" /></>,
  <><path d="M6 2h12v7a6 6 0 0 1-12 0z" stroke={K} strokeWidth="1.3" /><path d="M6 2h12v3H6z" fill={B} stroke={B} /><path d="M6 4H1c0 5 2 7 5 8M18 4h5c0 5-2 7-5 8M12 15v5" stroke={K} strokeWidth="1.3" /><path d="M7 22h10" stroke={B} strokeWidth="2.5" /></>,
  <><path d="M3 1h11l7 7v15H3z" stroke={K} strokeWidth="1.3" /><path d="M14 1v7h7" stroke={K} /><path d="M7 20v-3M12 20v-7M17 20v-5" stroke={K} strokeWidth="3" /></>,
  <><rect x="2" y="6" width="21" height="16" stroke={K} /><text x="13" y="18" fontSize="11" textAnchor="middle" fill={B} stroke="none" fontFamily="Open Sans">123</text><path d="M6 0h7l-3 6h3L3 15l2-7H2z" fill="#f8a51b" stroke="#c45a09" strokeWidth="0.7" /></>,
  <><path d="M8 2h15v8M2 22h9M2 14v8" stroke={K} /><rect x="8" y="2" width="15" height="3" fill={G} stroke={K} /><rect x="5" y="14" width="4" height="3" stroke={K} /><path d="M12 11h11l-4 5v6h-3v-6z" fill="#fff" stroke={K} /><path d="M6 0h6l-3 5h3L3 13l2-6H2z" fill="#f8a51b" stroke="#c45a09" strokeWidth="0.7" /></>,
  <><rect x="1" y="2" width="22" height="21" fill="#b9d8f0" stroke="#2b7cc4" strokeWidth="1.5" /><path d="M2 22c6-2 5-8 9-10s7-3 11-9" stroke="#2b7cc4" strokeWidth="3" /><path d="M5 1a3 3 0 0 1 3 3c0 3-3 6-3 6S2 7 2 4a3 3 0 0 1 3-3z" fill="#d97a14" stroke="none" /><circle cx="19" cy="20" r="3.5" fill="#d97a14" stroke="none" /></>,
  <><path d="M12 2l10 10-10 10L2 12zM7 7l10 10M17 7L7 17" stroke="#8a4fb3" strokeWidth="1.4" /></>,
  <><path d="M2 3h11l9 9-9 9H2l8-9zM8 12h7l-5 9" stroke="#2b7cc4" strokeWidth="1.4" /></>,
];

const Chevs = () => <ChevronsRight size={24} strokeWidth={1.2} color="#323130" />;

const VizPanel = () => (
  <div className="w-[226px] shrink-0 bg-[#f3f2f1] border-x border-[#e1dfdd]">
    <div className="h-[50px] flex items-center justify-between pl-[10px] pr-[5px]">
      <span className="text-[18.5px] font-semibold text-[#323130]">Visualizations</span>
      <Chevs />
    </div>
    <div className="pl-[10px] text-[14px] leading-[20px] font-semibold text-[#323130] -mt-[2px]">Build visual</div>
    <div className="relative h-[48px] border-b border-[#a19f9d] mt-[5px]">
      <div className="flex items-start pl-[10px]">
        <div className="w-[40px] h-[40px] bg-[#c8c8c6] rounded-[2px] flex items-center justify-center">
          <svg width="32" height="32" viewBox="0 0 32 32">
            <path d="M2 2h22" stroke="#333" />
            <rect x="2" y="7" width="28" height="9" fill="#117865" stroke="#222" strokeDasharray="2 1" />
            <rect x="2" y="20" width="28" height="9" fill="#117865" stroke="#222" strokeDasharray="2 1" />
          </svg>
        </div>
        <svg width="32" height="32" viewBox="0 0 32 32" fill="none" stroke="#323130" strokeWidth="1.1" className="ml-[48px] mt-[4px]">
          <path d="M5 30h5M3 30V1h14l8 8v6M17 1v8h8M12 30c4 0 8-2 10-6l8-12-2-1-10 10c-4 1-5 4-6 9z" />
        </svg>
      </div>
      <span className="absolute left-[23px] bottom-[-5px] w-[10px] h-[10px] rotate-45 bg-[#f3f2f1] border-l border-t border-[#a19f9d]" />
    </div>
    <div className="grid grid-cols-[repeat(6,35.2px)] auto-rows-[35.2px] pl-[7px] mt-[14px]">
      {vizIcons.map((ic, i) => (
        <div key={i} className="flex items-center justify-center">
          <Svg>{ic}</Svg>
        </div>
      ))}
    </div>
    <div className="pl-[16px] text-[16px] leading-[12px] tracking-[2px] text-[#323130] mt-[5px] h-[36px]">...</div>
    <div className="h-px bg-[#e1dfdd]" />
    <div className="pl-[15px] pt-[11px] text-[14.5px] leading-[20px] text-[#323130]">Values</div>
    <div className="ml-[5px] mt-[7px] w-[213px] h-[34px] bg-white border border-dashed border-[#c8c6c4] flex items-center pl-[13px] text-[14.5px] text-[#323130]">Add data fields here</div>
    <div className="pl-[15px] mt-[14px] text-[14.5px] leading-[20px] font-semibold text-[#484644]">Drill through</div>
    <div className="flex items-center justify-between pl-[15px] pr-[27px] mt-[12px] h-[20px] text-[14.5px] text-[#323130]">
      <span>Cross-report</span>
      <div className="w-[40px] h-[20px] rounded-full border border-[#8a8886] flex items-center pl-[5px] text-[11px] text-[#605e5c]">
        <span className="w-[10px] h-[10px] rounded-full bg-[#605e5c] mr-[2px]" />
        Off
      </div>
    </div>
    <div className="flex items-center justify-between pl-[15px] pr-[27px] mt-[14px] h-[20px] text-[14.5px] text-[#323130]">
      <span>Keep all filters</span>
      <div className="w-[40px] h-[20px] rounded-full bg-[#117865] flex items-center pl-[5px] text-[11px] text-white">
        On
        <span className="w-[10px] h-[10px] rounded-full bg-white ml-[3px]" />
      </div>
    </div>
    <div className="ml-[5px] mt-[13px] w-[213px] h-[32px] bg-white border border-dashed border-[#c8c6c4] flex items-center pl-[10px] text-[14.5px] whitespace-nowrap text-[#323130]">Add drill-through fields here</div>
  </div>
);

const DataPanel = () => (
  <div className="w-[226px] shrink-0 bg-[#f3f2f1]">
    <div className="h-[50px] flex items-center justify-between pl-[11px] pr-[7px]">
      <span className="text-[18.5px] font-semibold text-[#323130]">Data</span>
      <Chevs />
    </div>
    <div className="ml-[6px] mt-[8px] w-[214px] h-[31px] bg-white border border-[#c8c6c4] rounded-[2px] flex items-center">
      <Search size={19} strokeWidth={1.2} color="#323130" className="ml-[13px] -scale-x-100" />
      <span className="ml-[9px] text-[15.5px] text-[#605e5c]">Search</span>
    </div>
    <div className="flex items-center ml-[17px] mt-[14px] text-[14px] text-[#323130]">
      <ChevronRight size={15} strokeWidth={1.2} />
      <svg width="15" height="15" viewBox="0 0 15 15" fill="none" stroke="#484644" className="ml-[5px]">
        <path d="M1 1h13v13H1zM1 5h13M1 9.5h13M5.5 5v9M10 5v9" />
      </svg>
      <span className="ml-[6px]">HR Manager</span>
    </div>
  </div>
);

const Rail = () => (
  <div className="w-[50px] shrink-0 bg-[#f3f2f1] border-r border-[#e1dfdd] flex flex-col items-center relative">
    <div className="absolute left-0 top-0 w-[3px] h-[50px] bg-[#117865]" />
    <svg width="20" height="20" viewBox="0 0 20 20" fill="none" stroke="#3b3a39" strokeWidth="1.2" className="mt-[15px] ml-[1px]">
      <path d="M1 1v18h18M4 6h3v11H4zM9 9h3v8H9zM14 3h3v14h-3z" />
    </svg>
    <svg width="22" height="20" viewBox="0 0 22 20" fill="none" stroke="#8a8886" strokeWidth="1.1" className="mt-[29px]">
      <path d="M1 1h20v18H1zM1 5.5h20M1 10h20M1 14.5h20M7.5 5.5V19M14 5.5V19" />
    </svg>
    <svg width="24" height="24" viewBox="0 0 24 24" fill="none" stroke="#8a8886" strokeWidth="1.1" className="mt-[29px]">
      <path d="M1 8h10v9H1zM1 12.5h10M13 1h10v9H13zM13 5h10M13 14h10v9H13zM13 18h10M11 9h2M11 16h2" />
    </svg>
    <div className="relative mt-[24px] w-[24px] h-[24px]">
      <svg width="24" height="24" viewBox="0 0 24 24" fill="none" stroke="#8a8886" strokeWidth="1.1">
        <path d="M6 12V2h9l5 5v12M15 2v5h5M21 9c2 4 2 8-1 11" />
      </svg>
      <span className="absolute left-[-2px] top-[12px] text-[9px] font-bold text-[#8a8886] leading-[10px]">DAX</span>
    </div>
  </div>
);

const PageTabs = () => (
  <div className="h-[44px] bg-[#f3f2f1] flex shrink-0">
    <div className="w-[160px] h-full flex items-center border-r border-[#a8a8a8] relative">
      <Monitor size={28} strokeWidth={1} color="#484644" className="ml-[14px]" />
      <Smartphone size={32} strokeWidth={1} color="#484644" className="ml-[26px]" />
      <span className="ml-[18px] w-0 h-0 border-y-[6px] border-y-transparent border-r-[6px] border-r-[#c8c6c4]" />
      <span className="ml-[22px] w-0 h-0 border-y-[6px] border-y-transparent border-l-[6px] border-l-[#c8c6c4]" />
      <span className="absolute left-[14px] bottom-[6px] w-[30px] h-[3px] rounded-full bg-[#117865]" />
    </div>
    <div className="w-[169px] bg-white flex items-center justify-center text-[14.6px] text-[#252423] border-r border-[#a8a8a8]">HR Manager (1/2)</div>
    <div className="relative w-[173px] bg-white flex items-center justify-center pt-[4px] text-[14.6px] text-[#252423] border-b-[5px] border-[#117865]">
      HR Manager (2/2)
      <span className="absolute right-[4px] top-[2px] text-[14px] leading-[14px]">x</span>
    </div>
    <div className="w-[49px] bg-[#117865] flex items-center justify-center">
      <Plus size={19} strokeWidth={3.2} color="#fff" />
    </div>
  </div>
);

const StatusBar = () => (
  <div className="h-[30px] bg-[#f3f2f1] border-t border-[#e1dfdd] border-b-[1px] border-b-black flex items-center text-[14px] text-[#484644] shrink-0">
    <span className="ml-[5px]">Page 2 of 2</span>
    <span className="ml-auto font-bold">-</span>
    <div className="ml-[6px] w-[125px] h-px bg-[#605e5c] relative">
      <span className="absolute left-[42px] top-[-7px] w-[4px] h-[15px] bg-[#484644]" />
      <span className="absolute left-[62px] top-[-3px] w-px h-[7px] bg-[#605e5c]" />
    </div>
    <Plus size={13} strokeWidth={1.5} className="ml-[5px]" />
    <span className="ml-[16px]">74%</span>
    <svg width="20" height="20" viewBox="0 0 20 20" fill="none" stroke="#605e5c" strokeWidth="1.6" className="ml-[24px]">
      <path d="M1 1h18v18H1z" strokeWidth="1.2" />
      <path d="M7 5H4v3M13 5h3v3M7 15H4v-3M13 15h3v-3" />
    </svg>
    <span className="ml-[17px] mr-[4px] whitespace-nowrap text-[14.5px]">Update available (click to download)</span>
  </div>
);

// ---------- taskbar ----------
const taskIcons: ReactNode[] = [
  <>
    <rect x="9" y="2" width="17" height="21" rx="1" fill="#f4f4f4" stroke="#ddd" />
    <rect x="3" y="8" width="17" height="21" rx="1" fill="#2b2b2b" />
  </>,
  <>
    <path d="M5 12c0-6 7-10 11-10l-3 24c-6 2-10-8-8-14z" fill="#3aa5e8" />
    <path d="M14 3c3-2 8-1 10 1l-4 22c-3 3-8 2-9 0z" fill="#7c5ce0" />
    <path d="M25 6c3 6 1 16-4 20-3 2-9 2-11 0 5 0 9-6 10-12z" fill="#f3a23a" />
    <path d="M10 26c4-6 2-12 6-16l4-1c-3 6 0 14-6 18z" fill="#ee5a8a" />
  </>,
  <>
    <path d="M3 5h10l2 3h13v20H3z" fill="#f6b92b" />
    <path d="M3 11h25v18H3z" fill="#fbd968" />
    <rect x="12" y="19" width="13" height="8" fill="#1681d6" />
  </>,
  <>
    <path d="M15 3a12 12 0 0 0-10 18l-2 7 7-2A12 12 0 1 0 15 3z" fill="#fff" stroke="#2a9d56" strokeWidth="2.6" />
    <path d="M11 9c-2 1-2 4 0 7s5 5 8 5c2 0 3-2 2-3l-3-1-1 1c-2-1-3-2-4-4l1-1-1-3z" fill="#2a9d56" />
  </>,
  <>
    <circle cx="22" cy="9" r="5" fill="#7b83d3" />
    <rect x="15" y="12" width="13" height="15" rx="5" fill="#7b83d3" />
    <circle cx="14" cy="7" r="5" fill="#5f67c4" />
    <rect x="1" y="9" width="17" height="17" rx="2" fill="#4a50a8" />
    <text x="9.5" y="22" fontSize="13" textAnchor="middle" fill="#fff" fontFamily="Open Sans" fontWeight="700">T</text>
  </>,
  <>
    <circle cx="15" cy="15" r="14" fill="#e33b2e" />
    <path d="M15 15L3 22a14 14 0 0 0 12 7l7-12z" fill="#2fa84f" />
    <path d="M15 8h13a14 14 0 0 1-12 21l6-12z" fill="#fcc934" />
    <circle cx="15" cy="15" r="7" fill="#fff" />
    <circle cx="15" cy="15" r="5.3" fill="#2f80ed" />
  </>,
  <>
    <path d="M10 7V3h10v4" fill="none" stroke="#2b9bd0" strokeWidth="2" />
    <path d="M3 7h24l1 20a3 3 0 0 1-3 3H5a3 3 0 0 1-3-3z" fill="#10457c" />
    <rect x="9" y="12" width="5.5" height="5.5" fill="#f25022" />
    <rect x="15.5" y="12" width="5.5" height="5.5" fill="#7fba00" />
    <rect x="9" y="18.5" width="5.5" height="5.5" fill="#00a4ef" />
    <rect x="15.5" y="18.5" width="5.5" height="5.5" fill="#ffb900" />
  </>,
  <>
    <path d="M11 2h12l6 9v16l-5 2H10z" fill="#1ea7e0" />
    <path d="M10 14l19-3v16H12z" fill="#57c5f0" />
    <rect x="1" y="9" width="15" height="15" rx="2" fill="#0f6cbd" />
    <circle cx="8.5" cy="16.5" r="3.7" fill="none" stroke="#fff" strokeWidth="2" />
  </>,
  <>
    <rect x="5" y="0" width="22" height="30" rx="2" fill="#6d7377" />
    <rect x="8" y="3" width="16" height="6" fill="#4cc4ec" />
    <path d="M8 11h4.500v4H8zM14 11h4.500v4H14zM8 17h4.500v4H8zM14 17h4.500v4H14zM8 23h4.500v4H8zM14 23h4.500v4H14z" fill="#d8d8d8" />
    <path d="M20 11h4v16h-4z" fill="#134a86" />
  </>,
  <>
    <path d="M15 1a14 14 0 0 1 14 14c0 3-3 5-7 5-5 0-7-2-7-5 0-3-3-4-6-3C5 8 9 1 15 1z" fill="#39c58a" />
    <path d="M1 15C2 6 9 1 15 1 9 4 7 8 8 12c-3-1-6 0-7 3z" fill="#0f77c8" />
    <path d="M1 15c0 8 6 14 14 14 3 0 6-1 8-3-7 2-13-2-12-8 0-3 2-5 4-5-6-2-13 0-14 2z" fill="#0e5aa7" />
  </>,
  <>
    <rect x="2" y="5" width="26" height="20" rx="4" fill="#fb0a3c" />
    <path d="M12 11l7 4-7 4z" fill="#fff" />
  </>,
  <>
    <path d="M10 3h10l9 16H19z" fill="#f8bc34" />
    <path d="M10 3L1 19l5 8 9-16z" fill="#1fa463" />
    <path d="M6 27l5-8h18l-5 8z" fill="#4285f4" />
  </>,
  <>
    <path d="M7 3h13v8H7z" fill="#f8bc34" />
    <path d="M7 3L1 9v6h6z" fill="#ea4335" />
    <path d="M1 15h6v8H1z" fill="#4285f4" />
    <path d="M1 23h6v5H4a3 3 0 0 1-3-3z" fill="#1967d2" />
    <path d="M7 20h13v8H7z" fill="#34a853" />
    <path d="M20 11v9l9 7V4z" fill="#188038" />
    <rect x="7" y="11" width="13" height="9" fill="#fff" />
  </>,
  <>
    <path d="M6 8c4 5 14 5 18 0M6 22c4-5 14-5 18 0" fill="none" stroke="#ea6a24" strokeWidth="3" />
    <circle cx="7" cy="3" r="1.5" fill="#888" />
    <circle cx="23" cy="3" r="1.5" fill="#888" />
    <circle cx="7" cy="27" r="1.5" fill="#888" />
  </>,
];

const Taskbar = () => (
  <div className="h-[60px] shrink-0 flex items-center bg-gradient-to-r from-[#e0ebf7] via-[#d8e2f6] to-[#e1ecf8]">
    <div className="relative ml-[26px] w-[32px] h-[36px] shrink-0">
      <svg width="30" height="36" viewBox="0 0 30 36">
        <path d="M4 20a10 10 0 0 0 14-10c-2 0-10 0-14 10z" fill="#eca23b" />
        <path d="M8 32a7 7 0 0 1-1-14c2-4 9-5 12-1a6 6 0 0 1 5 15z" fill="#7fb4e8" />
      </svg>
      <span className="absolute left-[15px] top-[-4px] w-[19px] h-[19px] rounded-full bg-[#c4261d] text-white text-[13px] leading-[19px] text-center">8</span>
    </div>
    <svg width="29" height="29" viewBox="0 0 29 29" className="ml-[273px] shrink-0">
      <rect x="0" y="0" width="14" height="14" fill="#3fc1f0" />
      <rect x="15" y="0" width="14" height="14" fill="#1b9be0" />
      <rect x="0" y="15" width="14" height="14" fill="#1693dd" />
      <rect x="15" y="15" width="14" height="14" fill="#0a78d0" />
    </svg>
    <div className="ml-[16px] w-[273px] h-[40px] rounded-full bg-[#f4f7fc] shadow-[0_1px_2px_rgba(0,0,0,0.25)] flex items-center shrink-0">
      <Search size={20} strokeWidth={2} color="#222" className="ml-[14px]" />
      <span className="ml-[10px] text-[16.5px] text-[#555]">Search</span>
      <svg width="58" height="36" viewBox="0 0 58 36" className="ml-auto mr-[6px]">
        <path d="M2 30c16 8 40 8 54 0v4H2z" fill="#f1d863" />
        <circle cx="15" cy="10" r="5" fill="#d99a1c" />
        <circle cx="9" cy="18" r="4" fill="#e2a923" />
        <circle cx="19" cy="19" r="4" fill="#c78c17" />
        <rect x="12" y="24" width="7" height="8" fill="#c9a85b" />
        <rect x="42" y="3" width="7" height="19" fill="#f2e6c7" stroke="#8c6b3f" />
        <circle cx="45.5" cy="12" r="3" fill="#d99a1c" />
        <path d="M40 32l4-10M51 32l-4-10" stroke="#7a5c33" />
      </svg>
    </div>
    <div className="flex ml-[1px]">
      {taskIcons.map((ic, i) => (
        <div key={i} className="relative w-[55.3px] h-[60px] flex items-center justify-center shrink-0">
          <svg width="30" height="30" viewBox="0 0 30 30">{ic}</svg>
          {i === 2 && <span className="absolute left-[25px] bottom-[2px] w-[6px] h-[6px] rounded-full bg-[#777]" />}
          {i === 3 && <span className="absolute left-[28px] top-[9px] w-[19px] h-[19px] rounded-full bg-[#0f6cbd] text-white text-[12px] leading-[19px] text-center">5</span>}
          {i === 4 && <span className="absolute left-[28px] top-[9px] w-[19px] h-[19px] rounded-full bg-[#0f6cbd] text-white text-[12px] leading-[19px] text-center">11</span>}
        </div>
      ))}
      <div className="relative w-[48px] h-[56px] mt-[2px] ml-[3px] bg-white/60 rounded-[4px] flex items-center justify-center shrink-0">
        <svg width="30" height="30" viewBox="0 0 30 30" className="mb-[4px]">
          <rect x="5" y="14" width="9" height="16" fill="#f6e27f" />
          <rect x="11" y="7" width="10" height="23" fill="#e6b32a" />
          <rect x="18" y="0" width="10" height="30" fill="#c9920f" />
        </svg>
        <span className="absolute bottom-[2px] left-[14px] w-[20px] h-[4px] rounded-full bg-[#0f6cbd]" />
      </div>
    </div>
    <ChevronUp size={20} strokeWidth={2} color="#222" className="ml-[87px]" />
    <svg width="24" height="22" viewBox="0 0 24 22" className="ml-[19px]">
      <path d="M6 16a5 5 0 0 1 0-10 6 6 0 0 1 11 1 4 4 0 0 1 2 8z" fill="#ddd" stroke="#333" />
      <circle cx="17" cy="15" r="5" fill="#fff" stroke="#1a73d8" strokeWidth="1.5" />
    </svg>
    <div className="ml-[21px] text-[14.5px] leading-[25px] text-center text-[#222]">
      <div>ENG</div>
      <div>IN</div>
    </div>
    <Wifi size={20} strokeWidth={1.6} color="#222" className="ml-[22px]" />
    <Volume2 size={20} strokeWidth={1.3} color="#222" className="ml-[11px]" />
    <svg width="22" height="18" viewBox="0 0 22 18" fill="none" stroke="#222" strokeWidth="1.3" className="ml-[9px]">
      <path d="M2 3h15v12H2zM17 7h3v4h-3z" />
      <path d="M10 1L6 9h4l-3 7" />
    </svg>
    <div className="ml-[19px] text-[14.5px] leading-[24px] text-right text-[#222] whitespace-nowrap">
      <div>9:18 PM</div>
      <div>3/30/2025</div>
    </div>
    <svg width="18" height="22" viewBox="0 0 18 22" className="ml-[12px]">
      <path d="M9 3a6 6 0 0 1 6 6v5l2 3H1l2-3V9a6 6 0 0 1 6-6z" fill="#222" />
      <circle cx="9" cy="20" r="2" fill="#222" />
      <text x="9" y="13" fontSize="9" textAnchor="middle" fill="#fff" fontFamily="Open Sans">z</text>
    </svg>
  </div>
);

const App = () => (
  <div className="w-[1920px] h-[1080px] overflow-hidden flex flex-col font-['Open_Sans',sans-serif] bg-white">
    <TitleBar />
    <MenuRow />
    <Ribbon />
    <div className="h-[790px] flex shrink-0">
      <Rail />
      <div className="w-[1418px] shrink-0 flex flex-col">
        <div className="h-[746px] flex shrink-0">
          <Canvas />
          <FiltersPanel />
        </div>
        <PageTabs />
      </div>
      <VizPanel />
      <DataPanel />
    </div>
    <StatusBar />
    <Taskbar />
  </div>
);

export default App;
